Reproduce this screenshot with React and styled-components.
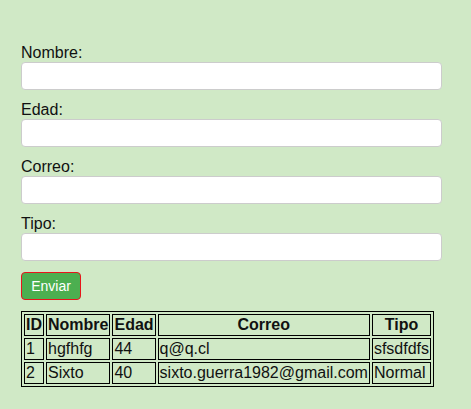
import React from "react";
import styled, { createGlobalStyle } from "styled-components";

const Global = createGlobalStyle`
  html, body { margin: 0; padding: 0; background: #d0e9c6; }
  body { font-family: "Liberation Sans", Arial, sans-serif; font-size: 16px; color: #111; }
`;

const Page = styled.div`
  padding: 43px 29px 20px 21px;
  min-height: 409px;
  box-sizing: border-box;
  background: #d0e9c6;
`;

const Form = styled.form`
  display: flex;
  flex-direction: column;
  gap: 10px;
  width: 421px;
`;

const Field = styled.div`
  display: flex;
  flex-direction: column;
`;

const Label = styled.label`
  display: block;
  font-size: 16px;
  line-height: 18px;
  padding-top: 1px;
  color: #111;
`;

const Input = styled.input`
  box-sizing: border-box;
  width: 421px;
  height: 28px;
  margin: 0;
  border: 1px solid #ccc;
  border-radius: 4px;
  background: #fff;
  padding: 4px 8px;
  font-family: inherit;
  font-size: 14px;
`;

const Button = styled.button`
  align-self: flex-start;
  margin-top: 1px;
  box-sizing: border-box;
  width: 60px;
  height: 28px;
  padding: 0;
  background: #4caf50;
  color: #fff;
  border: 1px solid #e8141b;
  border-radius: 4px;
  font-family: "Liberation Sans", Arial, sans-serif;
  font-size: 14px;
  cursor: pointer;
`;

const Table = styled.table`
  margin-top: 11px;
  border: 1px solid #000;
  border-collapse: separate;
  border-spacing: 2px;
  font-size: 16px;
`;

const Th = styled.th`
  border: 1px solid #000;
  padding: 1px;
  font-weight: bold;
  text-align: center;
  line-height: 18px;
`;

const Td = styled.td`
  border: 1px solid #000;
  padding: 1px;
  text-align: left;
  line-height: 18px;
`;

const rows = [
  { id: 1, nombre: "hgfhfg", edad: 44, correo: "q@q.cl", tipo: "sfsdfdfs" },
  { id: 2, nombre: "Sixto", edad: 40, correo: "sixto.guerra1982@gmail.com", tipo: "Normal" },
];

export default function App() {
  return (
    <>
      <Global />
      <Page>
        <Form onSubmit={(e) => e.preventDefault()}>
          {["Nombre", "Edad", "Correo", "Tipo"].map((f) => (
            <Field key={f}>
              <Label>{f}:</Label>
              <Input type="text" />
            </Field>
          ))}
          <Button type="submit">Enviar</Button>
        </Form>
        <Table>
          <thead>
            <tr>
              <Th>ID</Th>
              <Th>Nombre</Th>
              <Th>Edad</Th>
              <Th>Correo</Th>
              <Th>Tipo</Th>
            </tr>
          </thead>
          <tbody>
            {rows.map((r) => (
              <tr key={r.id}>
                <Td>{r.id}</Td>
                <Td>{r.nombre}</Td>
                <Td>{r.edad}</Td>
                <Td>{r.correo}</Td>
                <Td>{r.tipo}</Td>
              </tr>
            ))}
          </tbody>
        </Table>
      </Page>
    </>
  );
}
